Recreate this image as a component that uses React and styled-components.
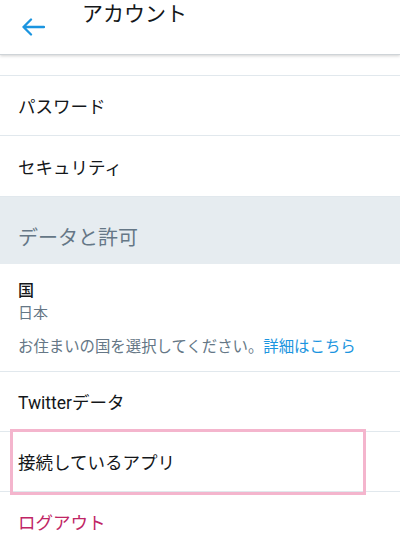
import styled, { createGlobalStyle } from "styled-components";

const GlobalStyle = createGlobalStyle`
  * { box-sizing: border-box; }
  html, body {
    margin: 0;
    padding: 0;
    background: #ffffff;
  }
  body {
    font-family: Roboto, "Noto Sans CJK JP", "Noto Sans", sans-serif;
    color: #14171a;
  }
`;

const Screen = styled.div`
  width: 400px;
  height: 546px;
  overflow: hidden;
  display: flex;
  flex-direction: column;
  background: #fff;
`;

const Header = styled.header`
  position: relative;
  z-index: 2;
  height: 55px;
  flex-shrink: 0;
  display: flex;
  align-items: flex-start;
  padding-left: 21px;
  background: #fff;
  border-bottom: 1px solid #cfd4d8;
  box-shadow: 0 1px 3px rgba(0, 0, 0, 0.18);
`;

const BackButton = styled.button`
  border: 0;
  padding: 0;
  margin-top: 18px;
  background: none;
  display: flex;
  cursor: pointer;
`;

const Title = styled.h1`
  margin: 0 0 0 37px;
  font-size: 21px;
  line-height: 28px;
  font-weight: 400;
  color: #14171a;
`;

const List = styled.div`
  display: flex;
  flex-direction: column;
`;

// the row above パスワード is scrolled under the header
const Clipped = styled.div`
  height: 21px;
  border-bottom: 1px solid #e1e8ed;
`;

const Row = styled.div`
  position: relative;
  height: ${(p) => p.h || 60}px;
  display: flex;
  align-items: center;
  padding-left: 18px;
  border-bottom: 1px solid #e1e8ed;
  font-size: 17.5px;
  color: ${(p) => (p.danger ? "#c02565" : "#14171a")};
`;

const Section = styled.div`
  background: #e6ecf0;
  padding: 29px 18px 14px;
  font-size: 20px;
  line-height: 24px;
  color: #657786;
`;

const Block = styled.div`
  padding: 17px 18px 14px;
  border-bottom: 1px solid #e1e8ed;
  display: flex;
  flex-direction: column;
`;

const Label = styled.div`
  font-size: 16px;
  line-height: 20px;
  font-weight: 500;
  color: #14171a;
`;

const Value = styled.div`
  margin-top: 2px;
  font-size: 15px;
  line-height: 20px;
  color: #657786;
`;

const Note = styled.div`
  margin-top: 14px;
  font-size: 15.4px;
  line-height: 20px;
  color: #657786;
  white-space: nowrap;
`;

const Link = styled.a`
  color: #1b95e0;
  text-decoration: none;
`;

const Highlight = styled.div`
  position: absolute;
  top: -3px;
  left: 10px;
  width: 356px;
  height: 66px;
  border: 3px solid #f4b5cd;
  pointer-events: none;
`;

function BackArrow() {
  return (
    <svg width="24" height="18" viewBox="0 0 24 18" fill="none">
      <path
        d="M23 9H2.5M10 1.5L2.5 9l7.5 7.5"
        stroke="#1b95e0"
        strokeWidth="2.3"
        strokeLinecap="round"
        strokeLinejoin="round"
      />
    </svg>
  );
}

export default function App() {
  return (
    <>
      <GlobalStyle />
      <Screen>
        <Header>
          <BackButton aria-label="戻る">
            <BackArrow />
          </BackButton>
          <Title>アカウント</Title>
        </Header>
        <List>
          <Clipped />
          <Row>パスワード</Row>
          <Row h={61}>セキュリティ</Row>
          <Section>データと許可</Section>
          <Block>
            <Label>国</Label>
            <Value>日本</Value>
            <Note>
              お住まいの国を選択してください。<Link href="#">詳細はこちら</Link>
            </Note>
          </Block>
          <Row>Twitterデータ</Row>
          <Row>
            接続しているアプリ
            <Highlight />
          </Row>
          <Row danger>ログアウト</Row>
        </List>
      </Screen>
    </>
  );
}
